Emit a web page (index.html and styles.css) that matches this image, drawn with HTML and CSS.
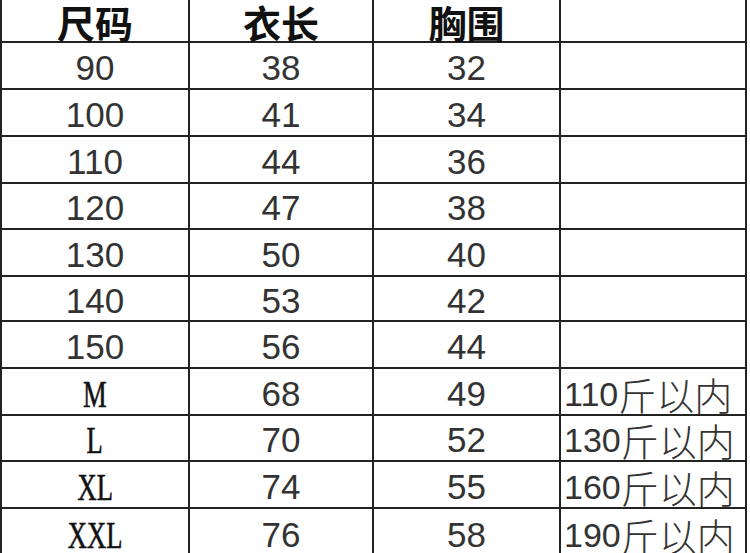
FILE: index.html
```html
<!DOCTYPE html>
<html lang="zh">
<head>
<meta charset="utf-8">
<title>尺码表</title>
<link rel="stylesheet" href="styles.css">
</head>
<body>
<div class="sheet">
  <div class="cell head">尺码</div>
  <div class="cell head">衣长</div>
  <div class="cell head">胸围</div>
  <div class="cell"></div>

  <div class="cell num">90</div><div class="cell num">38</div><div class="cell num">32</div><div class="cell"></div>
  <div class="cell num">100</div><div class="cell num">41</div><div class="cell num">34</div><div class="cell"></div>
  <div class="cell num">110</div><div class="cell num">44</div><div class="cell num">36</div><div class="cell"></div>
  <div class="cell num">120</div><div class="cell num">47</div><div class="cell num">38</div><div class="cell"></div>
  <div class="cell num">130</div><div class="cell num">50</div><div class="cell num">40</div><div class="cell"></div>
  <div class="cell num">140</div><div class="cell num">53</div><div class="cell num">42</div><div class="cell"></div>
  <div class="cell num">150</div><div class="cell num">56</div><div class="cell num">44</div><div class="cell"></div>

  <div class="cell size"><span class="letters">M</span></div><div class="cell num">68</div><div class="cell num">49</div><div class="cell note">110<span class="cjk">斤以内</span></div>
  <div class="cell size"><span class="letters">L</span></div><div class="cell num">70</div><div class="cell num">52</div><div class="cell note">130<span class="cjk">斤以内</span></div>
  <div class="cell size"><span class="letters">XL</span></div><div class="cell num">74</div><div class="cell num">55</div><div class="cell note">160<span class="cjk">斤以内</span></div>
  <div class="cell size"><span class="letters">XXL</span></div><div class="cell num">76</div><div class="cell num">58</div><div class="cell note">190<span class="cjk">斤以内</span></div>
</div>
</body>
</html>
```
FILE: styles.css
```css
html, body {
  margin: 0;
  padding: 0;
  background: #ffffff;
}

.sheet {
  display: grid;
  width: 743px;
  grid-template-columns: 186px 182px 185px 184px;
  grid-template-rows: 41px 45px 45px 45px 44px 45px 43px 45px 45px 44px 45px 48px;
  gap: 2px;
  padding: 0 2px;
  background: #222222;
  height: 553px;
  overflow: hidden;
}

.cell {
  background: #ffffff;
  display: flex;
  align-items: center;
  justify-content: center;
  color: #333333;
  white-space: nowrap;
}

.head {
  font-family: "Noto Sans CJK SC", sans-serif;
  font-weight: 700;
  font-size: 38px;
  line-height: 38px;
  color: #111111;
  padding-top: 2px;
}

.num {
  font-family: "Liberation Sans", Arial, sans-serif;
  font-size: 35px;
  line-height: 30px;
  padding-top: 4px;
}

.size {
  font-family: "Liberation Serif", "Times New Roman", serif;
  font-size: 38px;
  line-height: 30px;
  padding-top: 4px;
  color: #111111;
}

.letters {
  display: inline-block;
  transform: scaleX(0.7);
  -webkit-text-stroke: 0.6px #111111;
}

.note {
  justify-content: flex-start;
  padding-left: 3px;
  padding-top: 4px;
  font-family: "Liberation Sans", Arial, sans-serif;
  font-size: 34px;
  line-height: 30px;
}

.cjk {
  display: inline-block;
  font-family: "Noto Sans CJK SC", sans-serif;
  font-weight: 300;
  font-size: 38px;
  line-height: 32px;
}
```
